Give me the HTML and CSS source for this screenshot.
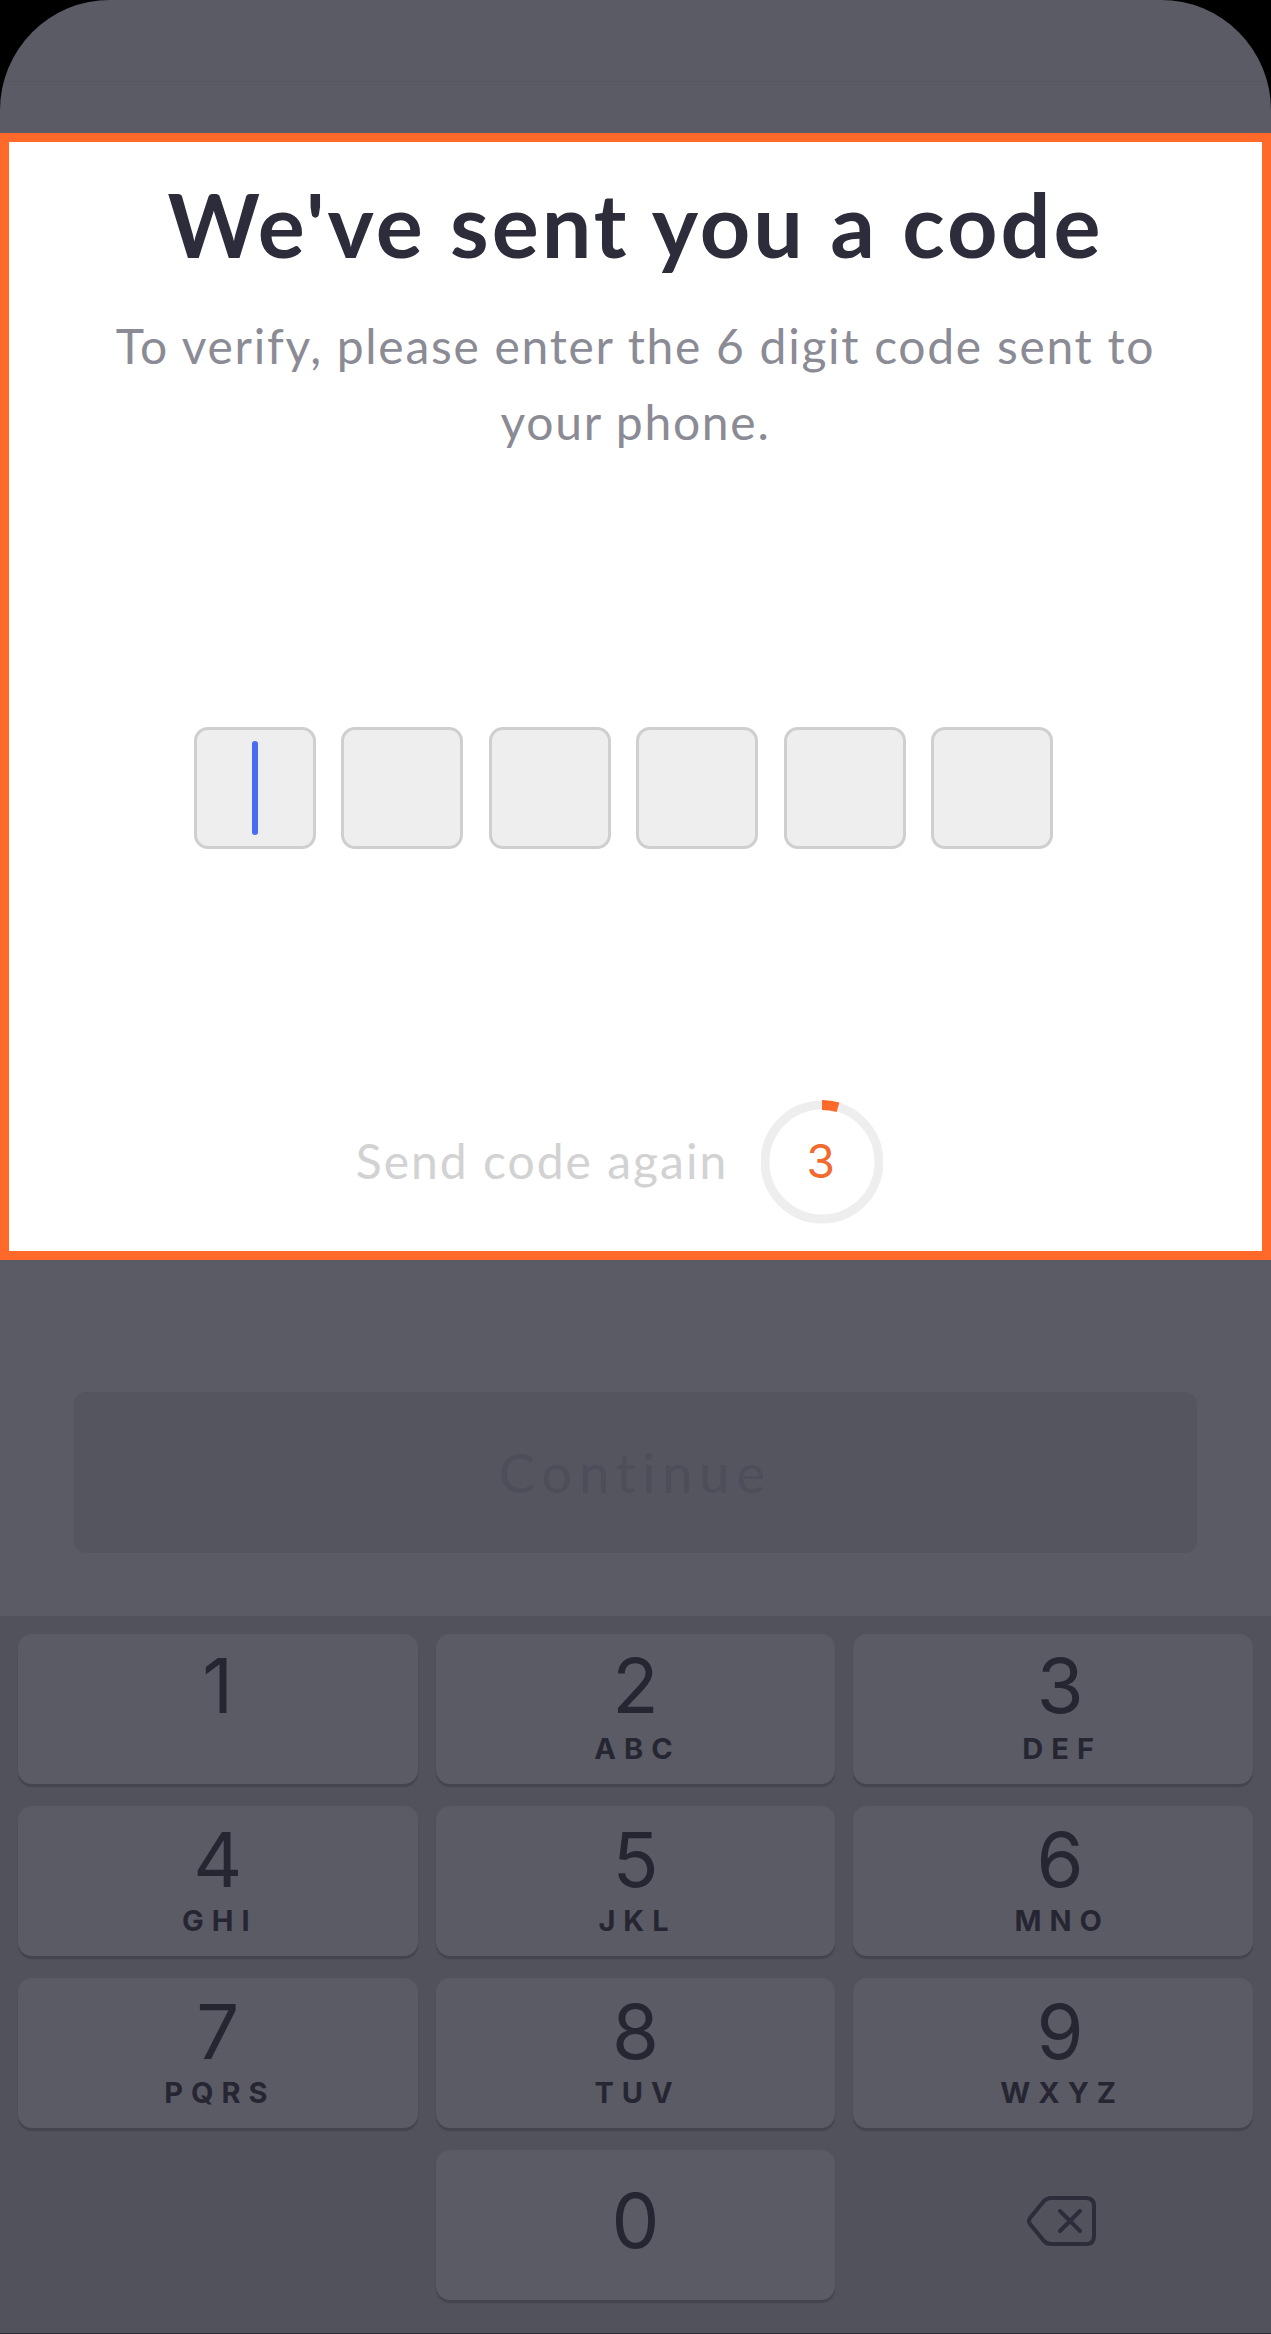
FILE: index.html
```html
<!DOCTYPE html>
<html lang="en">

<head>
	<meta charset="UTF-8">
	<meta name="viewport" content="width=device-width, initial-scale=1.0">
	<title>Verify code</title>
	<link rel="stylesheet" href="styles.css">
</head>

<body>
	<div class="screen">
		<div class="top">
			<div class="top__bar"></div>
		</div>

		<!--code panel-->
		<div class="panel">
			<h1 class="panel__title">We've sent you a code</h1>
			<p class="panel__text">To verify, please enter the 6 digit code sent to<br>your phone.</p>
			<div class="code">
				<div class="code__box"><span class="code__cursor"></span></div>
				<div class="code__box"></div>
				<div class="code__box"></div>
				<div class="code__box"></div>
				<div class="code__box"></div>
				<div class="code__box"></div>
			</div>
			<div class="resend">
				<span class="resend__text">Send code again</span>
				<div class="timer">
					<svg class="timer__ring" width="122" height="124" viewBox="0 0 122 124">
						<circle cx="61" cy="62" r="57" fill="none" stroke="#eeeeee" stroke-width="9" />
						<path d="M61 5A57 57 0 0 1 77 7.3" fill="none" stroke="#ff6a2b" stroke-width="10" />
					</svg>
					<span class="timer__num">3</span>
				</div>
			</div>
		</div>

		<!--continue-->
		<div class="action">
			<div class="action__btn">Continue</div>
		</div>

		<!--number pad-->
		<div class="keypad">
			<div class="key"><span class="key__num">1</span></div>
			<div class="key"><span class="key__num">2</span><span class="key__sub">ABC</span></div>
			<div class="key"><span class="key__num">3</span><span class="key__sub">DEF</span></div>
			<div class="key"><span class="key__num">4</span><span class="key__sub">GHI</span></div>
			<div class="key"><span class="key__num">5</span><span class="key__sub">JKL</span></div>
			<div class="key"><span class="key__num">6</span><span class="key__sub">MNO</span></div>
			<div class="key"><span class="key__num">7</span><span class="key__sub">PQRS</span></div>
			<div class="key"><span class="key__num">8</span><span class="key__sub">TUV</span></div>
			<div class="key"><span class="key__num">9</span><span class="key__sub">WXYZ</span></div>
			<div class="key key--blank"></div>
			<div class="key key--zero"><span class="key__num">0</span></div>
			<div class="key key--blank key--back">
				<svg width="70" height="52" viewBox="0 0 70 52">
					<path d="M24 3H59Q67 3 67 11V41Q67 49 59 49H24Q20 49 17 46L3 29Q1 26 3 23L17 6Q20 3 24 3Z" fill="none" stroke="#2c2c3a" stroke-width="4" stroke-linejoin="round" />
					<path d="M33 16L53 36M53 16L33 36" fill="none" stroke="#2c2c3a" stroke-width="4" stroke-linecap="round" />
				</svg>
			</div>
		</div>
	</div>
</body>

</html>
```

FILE: styles.css
```css
* {
	margin: 0;
	padding: 0;
	box-sizing: border-box;
}

html,
body {
	background: #000;
}

.screen {
	display: flex;
	flex-direction: column;
	width: 1271px;
	height: 2334px;
	overflow: hidden;
	border-radius: 110px 110px 0 0;
	background: #5b5b66;
	font-family: Lato, "Open Sans", sans-serif;
}

.top {
	height: 133px;
}

.top__bar {
	height: 82px;
	border-bottom: solid 1px #575762;
}

.panel {
	display: flex;
	flex-direction: column;
	align-items: center;
	height: 1127px;
	padding-top: 32px;
	border: solid 9px #ff6a2b;
	background: #fff;
}

.panel__title {
	font-size: 88px;
	line-height: 100px;
	font-weight: 700;
	letter-spacing: 3px;
	color: #2c2c3a;
}

.panel__text {
	margin-top: 34px;
	font-size: 48px;
	line-height: 76px;
	letter-spacing: 1.7px;
	text-align: center;
	color: #8b8b95;
}

.code {
	display: flex;
	gap: 25.4px;
	margin: 267px 24px 0 0;
}

.code__box {
	display: flex;
	align-items: center;
	justify-content: center;
	width: 122px;
	height: 122px;
	border: solid 3px #cfcfcf;
	border-radius: 14px;
	background: #eeeeee;
}

.code__cursor {
	width: 6px;
	height: 94px;
	border-radius: 3px;
	background: #4a6cf0;
}

.resend {
	display: flex;
	align-items: center;
	gap: 33px;
	margin: 251px 32px 0 0;
}

.resend__text {
	padding-bottom: 3px;
	font-size: 48px;
	letter-spacing: 2px;
	color: #d2d2d2;
}

.timer {
	position: relative;
	display: flex;
	align-items: center;
	justify-content: center;
	width: 122px;
	height: 124px;
}

.timer__ring {
	position: absolute;
	left: 0;
	top: 0;
}

.timer__num {
	padding: 0 3px 3px 0;
	font-family: Inter, sans-serif;
	font-size: 46px;
	color: #f26a2e;
}

.action {
	height: 356px;
	padding: 132px 74px 0;
}

.action__btn {
	height: 161px;
	border-radius: 12px;
	background: #555560;
	font-size: 54px;
	line-height: 161px;
	letter-spacing: 7px;
	text-align: center;
	color: #4e4e5a;
}

.keypad {
	display: grid;
	grid-template-columns: repeat(3, 1fr);
	grid-auto-rows: 150px;
	gap: 22px 18px;
	height: 718px;
	padding: 18px 18px 0;
	border-bottom: solid 1px #2c2c3a;
	background: #52525d;
}

.key {
	display: flex;
	flex-direction: column;
	align-items: center;
	border-radius: 14px;
	background: #5b5b66;
	box-shadow: 0 3px 1px #44444f;
	font-family: Inter, sans-serif;
	color: #262633;
}

.key:nth-child(3n) {
	padding-left: 14px;
}

.key--blank {
	background: none;
	box-shadow: none;
}

.key--back {
	justify-content: center;
	padding-bottom: 8px;
}

.key--back.key:nth-child(3n) {
	padding-left: 18px;
}

.key--zero {
	justify-content: center;
}

.key__num {
	margin-top: 11px;
	font-size: 76px;
	line-height: 84px;
}

.key:nth-child(-n+3) .key__num {
	margin-top: 9px;
}

.key--zero .key__num {
	margin-top: -10px;
}

.key__sub {
	margin-top: 3px;
	padding-left: 4px;
	font-size: 29px;
	line-height: 34px;
	font-weight: 700;
	letter-spacing: 8px;
}

.key:nth-child(-n+3) .key__sub {
	margin-top: 5px;
}
```
